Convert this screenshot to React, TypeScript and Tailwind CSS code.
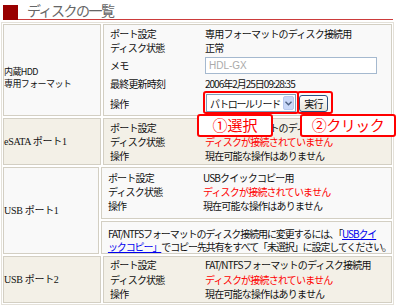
import { FC, ReactNode } from 'react';

const jp = "font-['Noto_Sans_CJK_JP',sans-serif]";
const serif = "font-['Liberation_Serif','Noto_Sans_CJK_JP',serif]";

type LineProps = {
  label: string;
  children: ReactNode;
  className?: string;
};

const Line: FC<LineProps> = ({ label, children, className }) => (
  <div className={`flex items-center whitespace-nowrap ${className ?? ''}`}>
    <span className="w-[95px] shrink-0">{label}</span>
    <span className="flex items-center">{children}</span>
  </div>
);

const NotConnected = () => <span className="text-[#ff0000]">ディスクが接続されていません</span>;
const NoOps = () => <span>現在可能な操作はありません</span>;

const cell = 'border border-[#d3cfc3]';
const beige = 'bg-[#f3f0e7]';
const pale = 'bg-[#f9f9f9]';

export default function App() {
  return (
    <div className={`relative h-[307px] w-[400px] overflow-hidden bg-white text-[10px] tracking-[-0.8px] text-[#111] ${jp}`}>
      {/* heading */}
      <div className="flex h-[20px] items-end pl-[3px] pr-[7px]">
        <div className="h-[15px] w-[15px] shrink-0 bg-[#990000]" />
        <div className="flex h-[20px] flex-1 items-end border-b border-[#cc3b3b] pb-[1px] pl-[9px]">
          <span className="text-[14px] leading-[16px] tracking-[-1.5px] text-[#666]">ディスクの一覧</span>
        </div>
      </div>

      {/* disk table */}
      <div className="ml-[1px] mt-[2px] flex w-[393px] flex-col gap-[2px] border border-[#e4e1d9] p-[1px]">
        {/* internal HDD */}
        <div className="flex h-[92px] gap-[2px]">
          <div className={`${cell} ${pale} flex w-[98px] flex-col justify-center pt-[15px] text-[9px] leading-[12px] tracking-[-0.6px]`}>
            <span>内蔵HDD</span>
            <span>専用フォーマット</span>
          </div>
          <div className={`${cell} ${pale} flex flex-1 flex-col pl-[6px] pt-[1px]`}>
            <Line label="ポート設定" className="h-[14px]">専用フォーマットのディスク接続用</Line>
            <Line label="ディスク状態" className="h-[14px]">正常</Line>
            <Line label="メモ" className="mt-[3px] h-[17px]">
              <span className="flex h-[17px] w-[172px] items-center border border-[#a5b9cf] bg-white pl-[3px] font-['Liberation_Sans',sans-serif] tracking-normal text-[#aaa]">
                HDL-GX
              </span>
            </Line>
            <Line label="最終更新時刻" className="h-[18px]">
              <span className="tracking-[-1px]">2006年2月25日09:28:35</span>
            </Line>
            <Line label="操作" className="mt-[2px] h-[18px]">
              <span className="ml-[1px] flex h-[18px] w-[90px] items-center justify-between border border-[#7f9db9] bg-white pl-[3px] pr-[1px]">
                <span className="tracking-[-1.3px]">パトロールリード</span>
                <span className="flex h-[14px] w-[11px] items-center justify-center rounded-[2px] border border-[#b9c9ef] bg-[#c9d8f8]">
                  <svg width="7" height="5" viewBox="0 0 7 5">
                    <path d="M0.5 0.8 L3.5 3.8 L6.5 0.8" fill="none" stroke="#4d6185" strokeWidth="1.4" />
                  </svg>
                </span>
              </span>
              <span className="ml-[3px] flex h-[17px] w-[29px] items-center justify-center rounded-[3px] border border-[#2b4f7e] bg-gradient-to-b from-white to-[#e6e3d8]">
                実行
              </span>
            </Line>
          </div>
        </div>

        {/* eSATA */}
        <div className="flex h-[47px] gap-[2px]">
          <div className={`${cell} ${beige} flex w-[98px] items-center ${serif} text-[10px] tracking-[-0.3px]`}>
            eSATA ポート1
          </div>
          <div className={`${cell} ${beige} flex flex-1 flex-col pl-[6px] pt-[2px] leading-[14px]`}>
            <Line label="ポート設定">専用フォーマットのディスク接続用</Line>
            <Line label="ディスク状態"><NotConnected /></Line>
            <Line label="操作"><NoOps /></Line>
          </div>
        </div>

        {/* USB 1 */}
        <div className="flex h-[87px] gap-[2px]">
          <div className={`${cell} ${pale} flex w-[98px] items-center ${serif} text-[10px] tracking-[-0.3px]`}>
            USB ポート1
          </div>
          <div className="flex flex-1 flex-col gap-[2px]">
            <div className={`${cell} ${pale} flex h-[52px] flex-col pl-[6px] pt-[3px] leading-[14px]`}>
              <Line label="ポート設定">USBクイックコピー用</Line>
              <Line label="ディスク状態"><NotConnected /></Line>
              <Line label="操作"><NoOps /></Line>
            </div>
            <div className={`${cell} ${pale} flex-1 whitespace-nowrap pl-[6px] pt-[5px] leading-[13px] tracking-[-1.1px]`}>
              FAT/NTFSフォーマットのディスク接続用に変更するには、「
              <span className="text-[#0000ee] underline">USBクイ</span>
              <br />
              <span className="text-[#0000ee] underline">ックコピー」</span>
              でコピー先共有をすべて「未選択」に設定してください。
            </div>
          </div>
        </div>

        {/* USB 2 */}
        <div className="flex h-[47px] gap-[2px]">
          <div className={`${cell} ${beige} flex w-[98px] items-center ${serif} text-[10px] tracking-[-0.3px]`}>
            USB ポート2
          </div>
          <div className={`${cell} ${beige} flex flex-1 flex-col pl-[6px] pt-[1px] leading-[14.5px]`}>
            <Line label="ポート設定">FAT/NTFSフォーマットのディスク接続用</Line>
            <Line label="ディスク状態"><NotConnected /></Line>
            <Line label="操作"><NoOps /></Line>
          </div>
        </div>
      </div>

      {/* annotations */}
      <div className="absolute left-[203px] top-[91px] h-[23px] w-[96px] rounded-[3px] border-2 border-[#ff0000]" />
      <div className="absolute left-[297px] top-[91px] h-[23px] w-[36px] rounded-[3px] border-2 border-[#ff0000]" />
      <div className="absolute left-[197px] top-[114px] flex h-[23px] w-[76px] items-center justify-center rounded-[3px] border-2 border-[#ff0000] bg-white text-[15px] tracking-[0px] text-[#ff0000]">
        ①選択
      </div>
      <div className="absolute left-[300px] top-[114px] flex h-[23px] w-[96px] items-center justify-center rounded-[3px] border-2 border-[#ff0000] bg-white text-[15px] tracking-[-0.5px] text-[#ff0000]">
        ②クリック
      </div>
    </div>
  );
}
